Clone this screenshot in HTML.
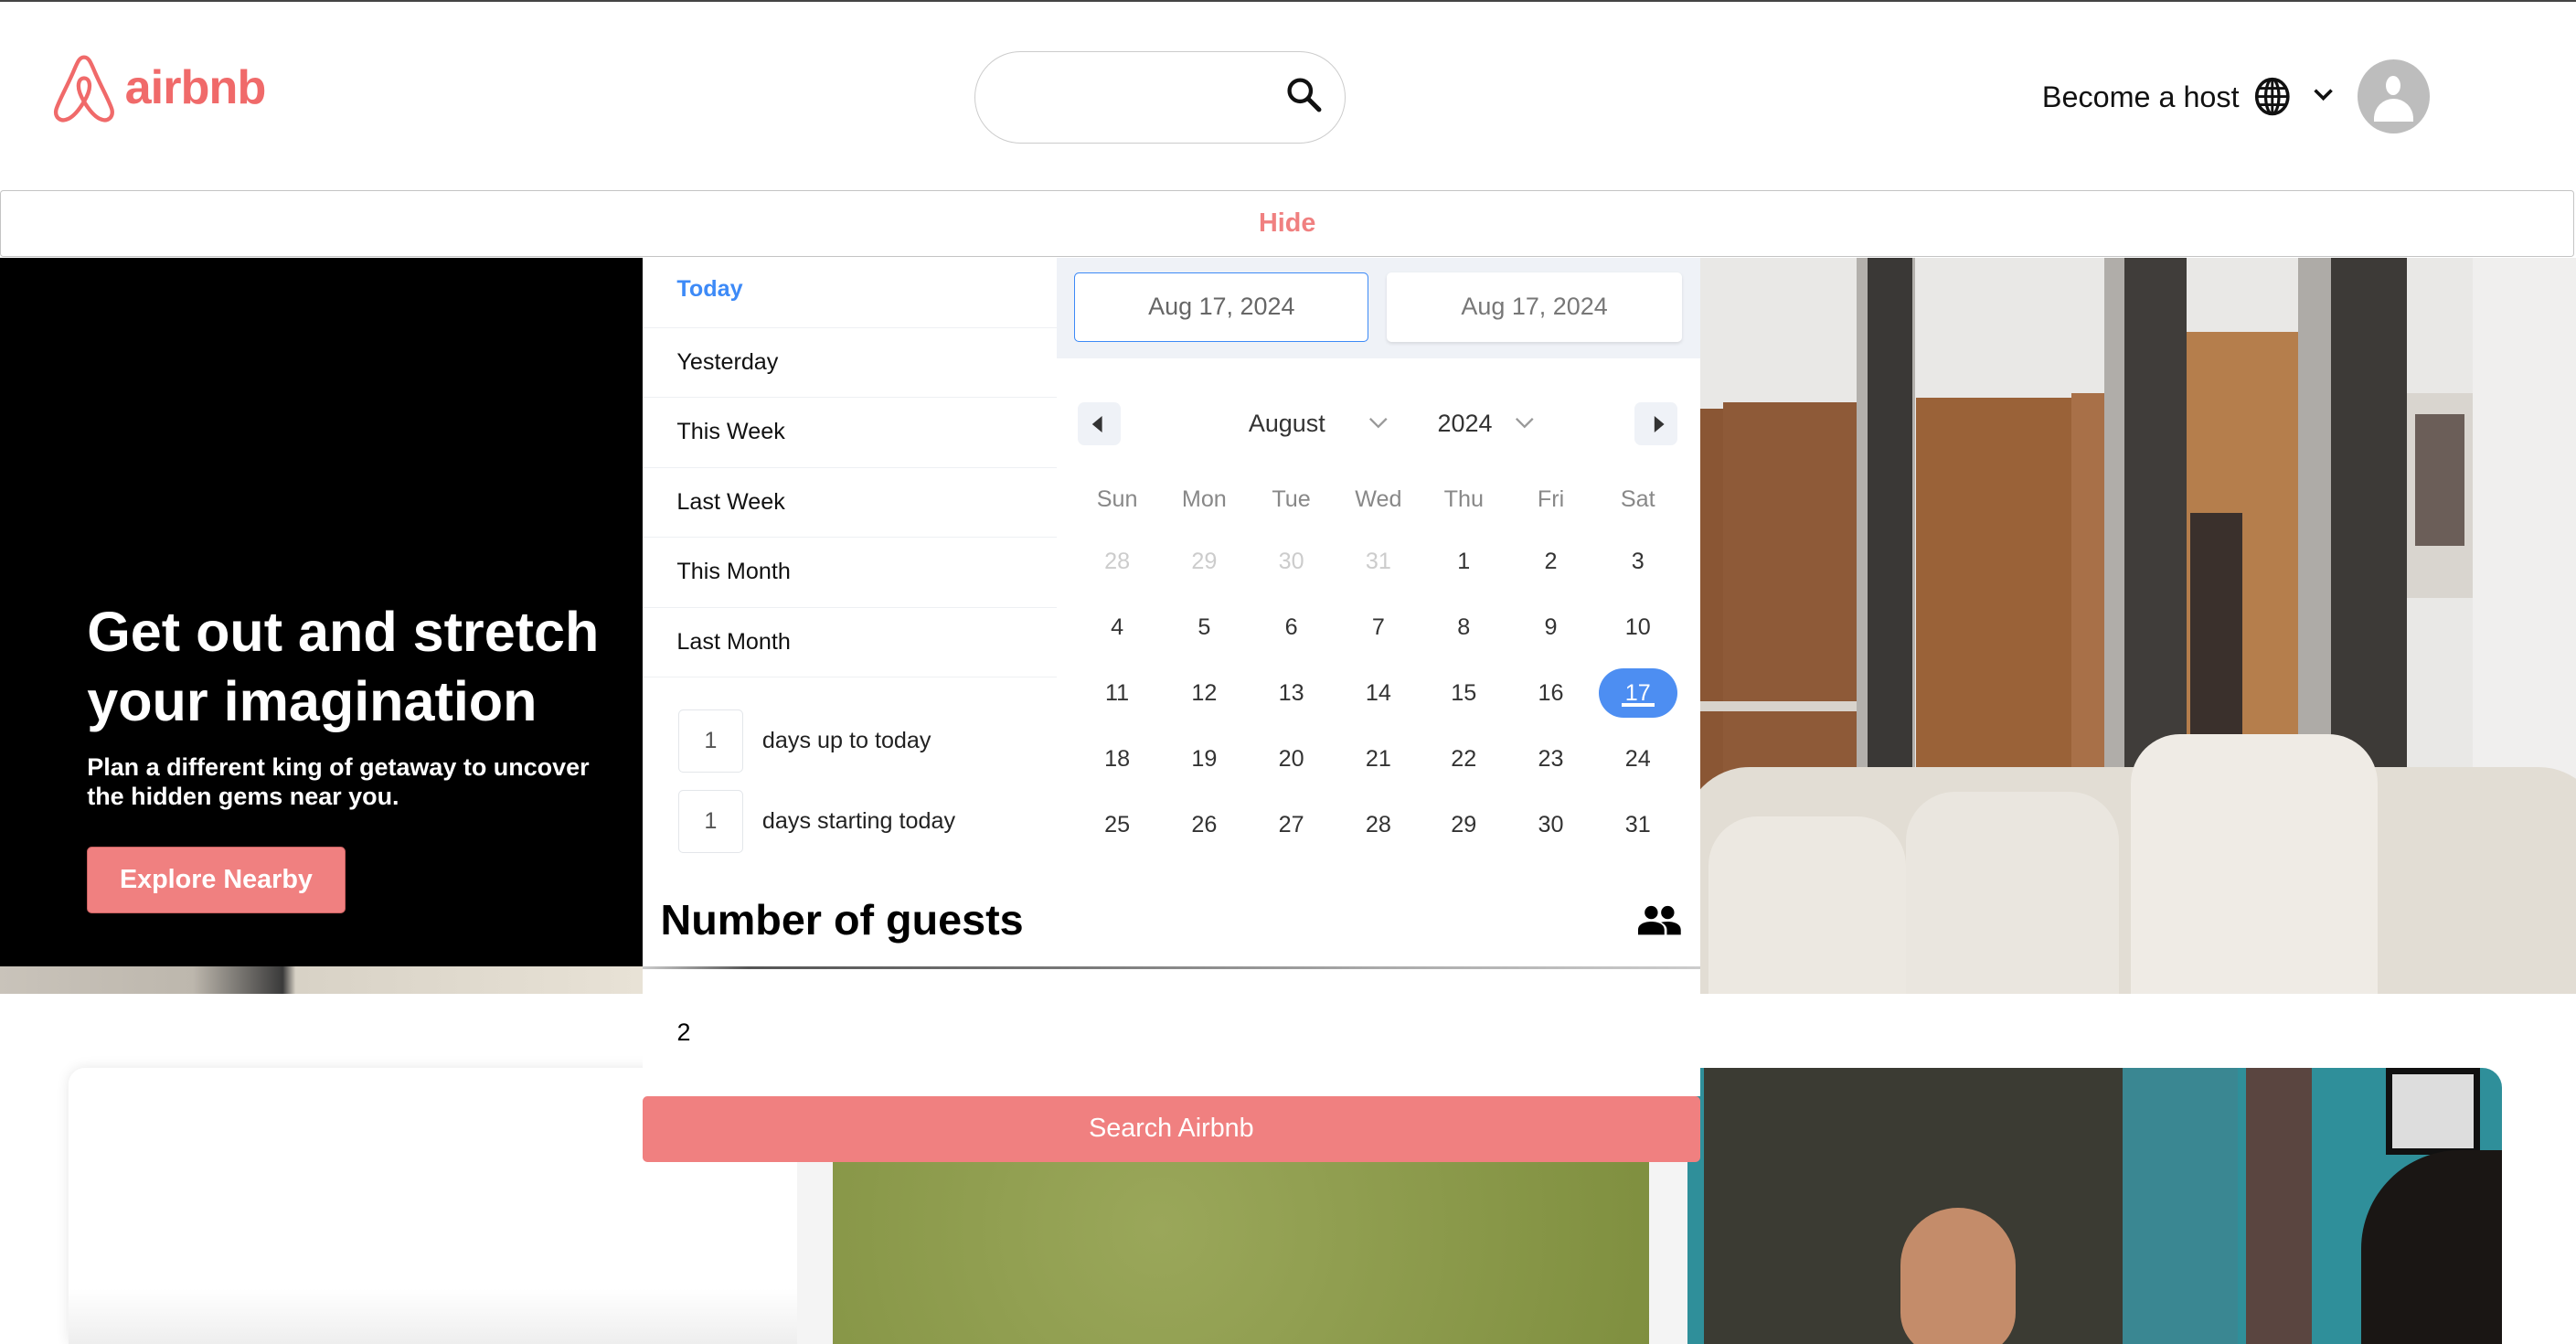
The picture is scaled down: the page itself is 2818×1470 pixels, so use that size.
<!DOCTYPE html>
<html><head><meta charset="utf-8"><style>
html,body{margin:0;padding:0;background:#fff;overflow:hidden}
body{width:2818px;height:1470px}
#w{zoom:1.79719;width:1568px;height:818px;position:relative;overflow:hidden;font-family:"Liberation Sans",Arial,sans-serif;background:#fff}
.a{position:absolute}
.cal div{position:absolute;width:40px;margin-left:-20px;text-align:center;font-size:14px;color:#333}
</style></head><body><div id="w">
<div class="a" style="left:0;top:0;width:1568px;height:1px;background:#444"></div>
<svg class="a" style="left:31px;top:33px" width="40" height="42" viewBox="0 0 40 42"><path d="M20 2C17 2 16 5 13 12C9 21 4 30 3 34C2 39 6 41 9 40C13 39 17 34 20 29C23 34 27 39 31 40C34 41 38 39 37 34C36 30 31 21 27 12C24 5 23 2 20 2Z M20 29C17 24 16 20 17 17C18 14 22 14 23 17C24 20 23 24 20 29Z" fill="none" stroke="#f06a6a" stroke-width="2.4" stroke-linejoin="round"/></svg>
<div class="a" style="left:76px;top:37px;font-size:29px;color:#f06a6a;font-weight:bold;letter-spacing:-0.5px">airbnb</div>
<div class="a" style="left:593px;top:31px;width:225px;height:55px;border:1px solid #ccc;border-radius:28px"></div>
<svg class="a" style="left:783px;top:47px" width="22" height="22" viewBox="0 0 22 22"><circle cx="8.5" cy="8.5" r="6.5" fill="none" stroke="#111" stroke-width="2.4"/><path d="M13.5 13.5L20 20" stroke="#111" stroke-width="2.8" stroke-linecap="round"/></svg>
<div class="a" style="left:1243px;top:49px;font-size:18px;color:#111">Become a host</div>
<svg class="a" style="left:1372px;top:47px" width="22" height="24" viewBox="0 0 22 24"><ellipse cx="11" cy="12" rx="9.5" ry="10.5" fill="none" stroke="#111" stroke-width="2"/><ellipse cx="11" cy="12" rx="4" ry="10.5" fill="none" stroke="#111" stroke-width="1.8"/><path d="M1.5 12H20.5M11 1.5V22.5M3 7H19M3 17H19" stroke="#111" stroke-width="1.6"/></svg>
<svg class="a" style="left:1407px;top:53px" width="14" height="10" viewBox="0 0 14 10"><path d="M2 2L7 7L12 2" fill="none" stroke="#111" stroke-width="2"/></svg>
<div class="a" style="left:1435px;top:36px;width:44px;height:45px;border-radius:50%;background:#bdbdbd;overflow:hidden"><div class="a" style="left:17px;top:10px;width:9px;height:12px;border-radius:50%;background:#fff"></div><div class="a" style="left:10px;top:24px;width:24px;height:14px;border-radius:12px 12px 0 0;background:#fff"></div></div>
<div class="a" style="left:0;top:116px;width:1566px;height:39px;border:1px solid #c4c4c4;border-radius:2px;text-align:center;line-height:39px;color:#f08080;font-weight:bold;font-size:16px">Hide</div>
<div class="a" style="left:0;top:157px;width:391px;height:448px;background:#000"></div>
<div class="a" style="left:0;top:588px;width:391px;height:17px;background:linear-gradient(90deg,#c9c3ba,#bdb7ad 30%,#3a3a3a 44%,#d8d2c6 46%,#e8e2d6)"></div>
<div class="a" style="left:53px;top:364px;width:340px;font-size:34px;font-weight:bold;color:#fff;line-height:42px">Get out and stretch your imagination</div>
<div class="a" style="left:53px;top:458px;width:330px;font-size:15px;font-weight:bold;color:#fff;line-height:18px">Plan a different king of getaway to uncover the hidden gems near you.</div>
<div class="a" style="left:53px;top:515px;width:156px;height:40px;background:#f08080;border:1px solid #c96060;border-radius:3px;color:#fff;font-weight:bold;font-size:16px;line-height:40px;text-align:center">Explore Nearby</div>
<!-- hero right photo -->
<div class="a" style="left:1035px;top:157px;width:533px;height:448px;background:#e9e8e6;overflow:hidden">
<div class="a" style="left:0;top:92px;width:14px;height:240px;background:#8a5634"></div>
<div class="a" style="left:14px;top:88px;width:84px;height:240px;background:#8e5a38"></div>
<div class="a" style="left:0;top:270px;width:100px;height:6px;background:#d8d3cc"></div>
<div class="a" style="left:131px;top:85px;width:95px;height:250px;background:#9a6238"></div>
<div class="a" style="left:226px;top:82px;width:20px;height:250px;background:#a87048"></div>
<div class="a" style="left:296px;top:45px;width:70px;height:285px;background:#b57e4c"></div>
<div class="a" style="left:298px;top:155px;width:32px;height:170px;background:#3a302c"></div>
<div class="a" style="left:430px;top:82px;width:40px;height:125px;background:#d9d5cf"></div>
<div class="a" style="left:435px;top:95px;width:30px;height:80px;background:#6b5e58"></div>
<div class="a" style="left:470px;top:0;width:63px;height:448px;background:#f0efee"></div>
<div class="a" style="left:95px;top:0;width:36px;height:448px;background:#b3b0ac"></div>
<div class="a" style="left:102px;top:0;width:27px;height:448px;background:#3a3836"></div>
<div class="a" style="left:246px;top:0;width:50px;height:448px;background:#b0ada9"></div>
<div class="a" style="left:258px;top:0;width:38px;height:448px;background:#403d3a"></div>
<div class="a" style="left:364px;top:0;width:66px;height:448px;background:#aeaba7"></div>
<div class="a" style="left:384px;top:0;width:46px;height:448px;background:#3d3a37"></div>
<div class="a" style="left:-10px;top:310px;width:560px;height:140px;background:#e2ddd4;border-radius:40px 40px 0 0"></div>
<div class="a" style="left:5px;top:340px;width:120px;height:110px;background:#ece8e1;border-radius:30px 30px 0 0"></div>
<div class="a" style="left:125px;top:325px;width:130px;height:125px;background:#eae6df;border-radius:30px 30px 0 0"></div>
<div class="a" style="left:262px;top:290px;width:150px;height:160px;background:#efebe5;border-radius:30px 30px 0 0"></div>
</div>
<!-- panel -->
<div class="a" style="left:391px;top:157px;width:252px;height:375px;background:#fff;border-right:1px solid #eee"></div>
<div class="a" style="left:391px;top:157px;width:252px;font-size:14px;color:#111">
<div style="height:42px;border-bottom:1px solid #eef0f3;line-height:38px;padding-left:21px;color:#3d8af7;font-weight:bold">Today</div>
<div style="height:42px;border-bottom:1px solid #eef0f3;line-height:42px;padding-left:21px">Yesterday</div>
<div style="height:42px;border-bottom:1px solid #eef0f3;line-height:42px;padding-left:21px">This Week</div>
<div style="height:42px;border-bottom:1px solid #eef0f3;line-height:42px;padding-left:21px">Last Week</div>
<div style="height:42px;border-bottom:1px solid #eef0f3;line-height:42px;padding-left:21px">This Month</div>
<div style="height:42px;border-bottom:1px solid #eef0f3;line-height:42px;padding-left:21px">Last Month</div>
</div>
<div class="a" style="left:413px;top:432px;width:38px;height:37px;border:1px solid #e3e6ea;border-radius:3px;text-align:center;line-height:37px;font-size:14px;color:#555">1</div>
<div class="a" style="left:464px;top:443px;font-size:14px;color:#222">days up to today</div>
<div class="a" style="left:413px;top:481px;width:38px;height:37px;border:1px solid #e3e6ea;border-radius:3px;text-align:center;line-height:37px;font-size:14px;color:#555">1</div>
<div class="a" style="left:464px;top:492px;font-size:14px;color:#222">days starting today</div>
<div class="a" style="left:643px;top:157px;width:392px;height:375px;background:#fff"></div>
<div class="a" style="left:643px;top:157px;width:392px;height:61px;background:#eff2f7"></div>
<div class="a" style="left:654px;top:166px;width:178px;height:41px;background:#fff;border:1px solid #3d8af7;border-radius:3px;text-align:center;line-height:41px;font-size:15px;color:#666">Aug 17, 2024</div>
<div class="a" style="left:844px;top:166px;width:180px;height:42px;background:#fff;border-radius:3px;box-shadow:0 1px 2px rgba(0,0,0,.1);text-align:center;line-height:42px;font-size:15px;color:#777">Aug 17, 2024</div>
<div class="a" style="left:656px;top:245px;width:26px;height:26px;background:#eff2f7;border-radius:4px"></div>
<svg class="a" style="left:664px;top:253px" width="8" height="10"><path d="M7 0L1 5L7 10Z" fill="#333"/></svg>
<div class="a" style="left:995px;top:245px;width:26px;height:26px;background:#eff2f7;border-radius:4px"></div>
<svg class="a" style="left:1006px;top:253px" width="8" height="10"><path d="M1 0L7 5L1 10Z" fill="#333"/></svg>
<div class="a" style="left:760px;top:249px;font-size:15px;color:#333">August</div>
<svg class="a" style="left:833px;top:254px" width="12" height="8"><path d="M1 1L6 6L11 1" fill="none" stroke="#999" stroke-width="1.3"/></svg>
<div class="a" style="left:875px;top:249px;font-size:15px;color:#333">2024</div>
<svg class="a" style="left:922px;top:254px" width="12" height="8"><path d="M1 1L6 6L11 1" fill="none" stroke="#999" stroke-width="1.3"/></svg>
<div class="a" style="left:973px;top:407px;width:48px;height:30px;border-radius:15px;background:#4d8ef2"></div>
<div class="a" style="left:987px;top:428px;width:20px;height:2px;background:#fff"></div>
<div class="cal">
<div style="left:680px;top:296px;color:#888">Sun</div><div style="left:733px;top:296px;color:#888">Mon</div><div style="left:786px;top:296px;color:#888">Tue</div><div style="left:839px;top:296px;color:#888">Wed</div><div style="left:891px;top:296px;color:#888">Thu</div><div style="left:944px;top:296px;color:#888">Fri</div><div style="left:997px;top:296px;color:#888">Sat</div>
<div style="left:680px;top:334px;color:#ccc">28</div><div style="left:733px;top:334px;color:#ccc">29</div><div style="left:786px;top:334px;color:#ccc">30</div><div style="left:839px;top:334px;color:#ccc">31</div><div style="left:891px;top:334px">1</div><div style="left:944px;top:334px">2</div><div style="left:997px;top:334px">3</div>
<div style="left:680px;top:374px">4</div><div style="left:733px;top:374px">5</div><div style="left:786px;top:374px">6</div><div style="left:839px;top:374px">7</div><div style="left:891px;top:374px">8</div><div style="left:944px;top:374px">9</div><div style="left:997px;top:374px">10</div>
<div style="left:680px;top:414px">11</div><div style="left:733px;top:414px">12</div><div style="left:786px;top:414px">13</div><div style="left:839px;top:414px">14</div><div style="left:891px;top:414px">15</div><div style="left:944px;top:414px">16</div><div style="left:997px;top:414px;color:#fff">17</div>
<div style="left:680px;top:454px">18</div><div style="left:733px;top:454px">19</div><div style="left:786px;top:454px">20</div><div style="left:839px;top:454px">21</div><div style="left:891px;top:454px">22</div><div style="left:944px;top:454px">23</div><div style="left:997px;top:454px">24</div>
<div style="left:680px;top:494px">25</div><div style="left:733px;top:494px">26</div><div style="left:786px;top:494px">27</div><div style="left:839px;top:494px">28</div><div style="left:891px;top:494px">29</div><div style="left:944px;top:494px">30</div><div style="left:997px;top:494px">31</div>
</div>
<div class="a" style="left:391px;top:532px;width:644px;height:56px;background:#fff"></div>
<div class="a" style="left:402px;top:545px;font-size:26px;font-weight:bold;color:#000">Number of guests</div>
<svg class="a" style="left:997px;top:551px" width="26" height="18" viewBox="0 0 26 18"><circle cx="8" cy="4.5" r="4" fill="#000"/><circle cx="18" cy="4.5" r="4" fill="#000"/><path d="M0 18V15C0 11 5 10 8 10C11 10 16 11 16 15V18Z M14 10.5C15 10.2 16.5 10 18 10C21 10 26 11 26 15V18H17.5V15C17.5 13 16 11.5 14 10.5Z" fill="#000"/></svg>
<div class="a" style="left:391px;top:588px;width:644px;height:2px;background:linear-gradient(90deg,#ccc,#555 10%,#777 40%,#aaa 70%,#ccc)"></div>
<div class="a" style="left:42px;top:650px;width:443px;height:168px;background:linear-gradient(#fff 80%,#eee);box-shadow:0 0 8px rgba(0,0,0,.1);border-radius:10px 0 0 0"></div>
<div class="a" style="left:485px;top:650px;width:542px;height:168px;background:#f4f4f4"></div>
<div class="a" style="left:507px;top:700px;width:497px;height:118px;background:radial-gradient(circle at 40% 40%,#9aa75a,#7f8f3f)"></div>
<div class="a" style="left:1027px;top:650px;width:496px;height:168px;background:#2f8f9a;border-radius:0 12px 0 0;overflow:hidden">
<div class="a" style="left:10px;top:0;width:255px;height:168px;background:#3b3b33"></div>
<div class="a" style="left:265px;top:0;width:70px;height:168px;background:#3a8792"></div>
<div class="a" style="left:340px;top:0;width:40px;height:168px;background:#5a4540"></div>
<div class="a" style="left:425px;top:0;width:50px;height:45px;background:#ddd;border:4px solid #111"></div>
<div class="a" style="left:410px;top:50px;width:90px;height:118px;background:#1a1614;border-radius:60px 0 0 0"></div>
<div class="a" style="left:130px;top:85px;width:70px;height:90px;background:#c48c6a;border-radius:40px 40px 30px 30px"></div>
</div>
<div class="a" style="left:391px;top:590px;width:644px;height:77px;background:#fff"></div>
<div class="a" style="left:412px;top:620px;font-size:15px;color:#000">2</div>
<div class="a" style="left:391px;top:667px;width:644px;height:40px;background:#f08080;border-radius:3px;color:#fff;font-size:16px;line-height:40px;text-align:center">Search Airbnb</div>
</div></body></html>
